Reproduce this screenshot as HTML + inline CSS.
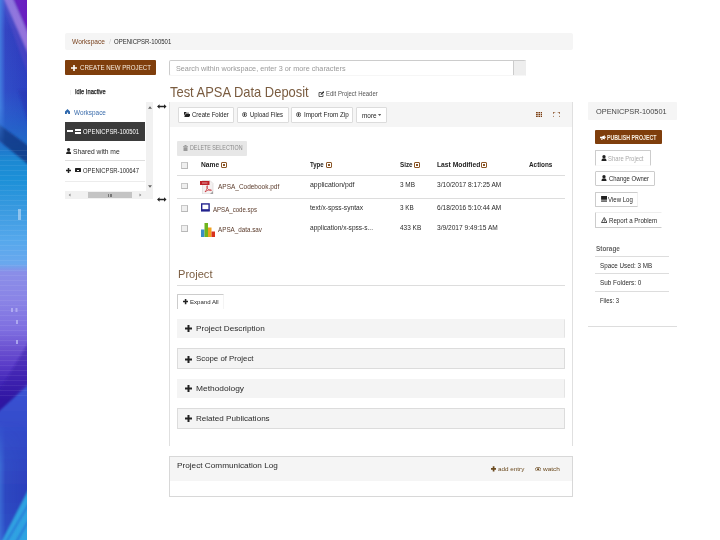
<!DOCTYPE html>
<html><head><meta charset="utf-8">
<style>
*{box-sizing:border-box;margin:0;padding:0}
html,body{width:720px;height:540px;overflow:hidden;background:#fff}
body{position:relative;font-family:"Liberation Sans",sans-serif;font-size:7px;color:#333;line-height:1}
.a,.t,svg{position:absolute}
.t{white-space:nowrap;transform-origin:0 50%;line-height:1}
#c{position:absolute;left:0;top:0;width:720px;height:540px;filter:blur(.35px)}
.strip{left:0;top:0;width:27px;height:540px;overflow:hidden;
 background:linear-gradient(180deg,#5a3fc8 0px,#2f52cc 30px,#2b50c8 90px,#1c3f9e 118px,#1b4ea8 135px,#1f86d2 160px,#3aa0e0 200px,#5aa6ea 250px,#7f86e6 275px,#8a80e4 330px,#5f50d8 365px,#3a2cb8 395px,#2f45c4 420px,#2a44c0 480px,#2850c8 540px);}
.bar{background:#f5f5f5}
.btn{border:1px solid #ccc;background:#fff;border-radius:1px}
.brown{background:#7f3e0c}
.hr{background:#ddd;height:1px}
.acc{left:177px;width:387.8px;background:#f4f4f4;border:1px solid #f4f4f4;border-right-color:#e4e4e4}
.cb{width:6.8px;height:6.6px;border:1px solid #b8b8b8;border-top-color:#c8c8c8;border-left-color:#c8c8c8;background:#efefef;left:181.2px}
</style></head><body>
<svg style="left:0;top:0" width="27" height="540" viewBox="0 0 27 540">
<defs>
<linearGradient id="g0" x1="0" y1="0" x2="0" y2="540" gradientUnits="userSpaceOnUse">
<stop offset="0" stop-color="#3a48c8"/><stop offset=".055" stop-color="#3038bc"/><stop offset=".167" stop-color="#2c42c2"/><stop offset=".222" stop-color="#2658c8"/><stop offset=".259" stop-color="#2268c8"/><stop offset=".296" stop-color="#1c88d2"/><stop offset=".333" stop-color="#1c90d8"/><stop offset=".389" stop-color="#3a9ae0"/><stop offset=".444" stop-color="#55a8ec"/><stop offset=".489" stop-color="#6aa8ee"/><stop offset=".504" stop-color="#8a8ee8"/><stop offset=".556" stop-color="#8a84e6"/><stop offset=".611" stop-color="#7e6ee0"/><stop offset=".648" stop-color="#6a50d0"/><stop offset=".676" stop-color="#5a3cc8"/><stop offset=".704" stop-color="#4428b8"/><stop offset=".74" stop-color="#2c14a0"/><stop offset="1" stop-color="#2c14a0"/>
</linearGradient>
<linearGradient id="g1" x1="0" y1="383" x2="0" y2="540" gradientUnits="userSpaceOnUse">
<stop offset="0" stop-color="#3c54d4"/><stop offset=".4" stop-color="#3048c6"/><stop offset=".7" stop-color="#2c40bc"/><stop offset="1" stop-color="#2a48c4"/>
</linearGradient>
<linearGradient id="g2" x1="0" y1="0" x2="27" y2="0" gradientUnits="userSpaceOnUse">
<stop offset="0" stop-color="#4a90e8" stop-opacity=".75"/><stop offset=".2" stop-color="#4a90e8" stop-opacity=".15"/><stop offset="1" stop-color="#4a90e8" stop-opacity="0"/>
</linearGradient>
<linearGradient id="g3" x1="0" y1="0" x2="0" y2="540" gradientUnits="userSpaceOnUse">
<stop offset="0" stop-color="#fff"/><stop offset=".2" stop-color="#fff"/><stop offset=".28" stop-color="#000"/><stop offset=".78" stop-color="#000"/><stop offset=".86" stop-color="#aaa"/><stop offset="1" stop-color="#aaa"/>
</linearGradient>
<mask id="mk" maskUnits="userSpaceOnUse" x="0" y="0" width="27" height="540"><rect width="27" height="540" fill="url(#g3)"/></mask>
<filter id="bl" x="-20%" y="-5%" width="140%" height="110%"><feGaussianBlur stdDeviation="1.2"/></filter>
</defs>
<rect width="27" height="540" fill="url(#g0)"/>
<g filter="url(#bl)">
<polygon points="-3,413 30,383 30,545 -3,545" fill="url(#g1)"/>
<polygon points="12,-3 30,-3 30,38" fill="#6a1ec0"/>
<polygon points="3,-3 12,-3 30,38 30,58" fill="#a87ee2" opacity=".85"/><polygon points="0,-3 3,-3 30,58 30,80" fill="#5a48c8" opacity=".5"/>
<polygon points="-3,123 30,147 30,166 -3,139" fill="#14357f" opacity=".8"/>
<polygon points="18,90 30,90 30,130" fill="#2834b0" opacity=".6"/>
<polygon points="30,487 30,545 0,545" fill="#2ea4e2"/><polygon points="30,500 30,504 6,545 3,545" fill="#2a58d0" opacity=".5"/><polygon points="30,516 30,520 16,545 13,545" fill="#2a58d0" opacity=".5"/>
<polygon points="30,340 30,380 -3,410 -3,395" fill="#3018a4" opacity=".45"/>
</g>
<rect x="0" y="0" width="27" height="540" fill="url(#g2)" mask="url(#mk)"/>
<rect x="0" y="150" width="27" height="1" fill="#fff" opacity=".07"/><rect x="0" y="155" width="27" height="1" fill="#fff" opacity=".07"/><rect x="0" y="160" width="27" height="1" fill="#fff" opacity=".07"/><rect x="0" y="165" width="27" height="1" fill="#fff" opacity=".07"/><rect x="0" y="170" width="27" height="1" fill="#fff" opacity=".07"/><rect x="0" y="175" width="27" height="1" fill="#fff" opacity=".07"/><rect x="0" y="180" width="27" height="1" fill="#fff" opacity=".07"/><rect x="0" y="185" width="27" height="1" fill="#fff" opacity=".07"/><rect x="0" y="190" width="27" height="1" fill="#fff" opacity=".07"/><rect x="0" y="195" width="27" height="1" fill="#fff" opacity=".07"/><rect x="0" y="200" width="27" height="1" fill="#fff" opacity=".07"/><rect x="0" y="205" width="27" height="1" fill="#fff" opacity=".07"/><rect x="0" y="210" width="27" height="1" fill="#fff" opacity=".07"/><rect x="0" y="215" width="27" height="1" fill="#fff" opacity=".07"/><rect x="0" y="220" width="27" height="1" fill="#fff" opacity=".07"/><rect x="0" y="225" width="27" height="1" fill="#fff" opacity=".07"/><rect x="0" y="230" width="27" height="1" fill="#fff" opacity=".07"/><rect x="0" y="235" width="27" height="1" fill="#fff" opacity=".07"/><rect x="0" y="240" width="27" height="1" fill="#fff" opacity=".07"/><rect x="0" y="245" width="27" height="1" fill="#fff" opacity=".07"/><rect x="0" y="250" width="27" height="1" fill="#fff" opacity=".07"/><rect x="0" y="255" width="27" height="1" fill="#fff" opacity=".07"/><rect x="0" y="260" width="27" height="1" fill="#fff" opacity=".07"/><rect x="0" y="265" width="27" height="1" fill="#fff" opacity=".07"/><rect x="0" y="270" width="27" height="1" fill="#fff" opacity=".07"/><rect x="0" y="275" width="27" height="1" fill="#fff" opacity=".07"/><rect x="0" y="280" width="27" height="1" fill="#fff" opacity=".07"/><rect x="0" y="285" width="27" height="1" fill="#fff" opacity=".07"/><rect x="0" y="290" width="27" height="1" fill="#fff" opacity=".07"/><rect x="0" y="295" width="27" height="1" fill="#fff" opacity=".07"/><rect x="0" y="300" width="27" height="1" fill="#fff" opacity=".07"/><rect x="0" y="305" width="27" height="1" fill="#fff" opacity=".07"/><rect x="0" y="310" width="27" height="1" fill="#fff" opacity=".07"/><rect x="0" y="315" width="27" height="1" fill="#fff" opacity=".07"/><rect x="0" y="320" width="27" height="1" fill="#fff" opacity=".07"/><rect x="0" y="325" width="27" height="1" fill="#fff" opacity=".07"/><rect x="0" y="330" width="27" height="1" fill="#fff" opacity=".07"/><rect x="0" y="335" width="27" height="1" fill="#fff" opacity=".07"/><rect x="0" y="340" width="27" height="1" fill="#fff" opacity=".07"/><rect x="0" y="345" width="27" height="1" fill="#fff" opacity=".07"/><rect x="0" y="350" width="27" height="1" fill="#fff" opacity=".07"/><rect x="0" y="355" width="27" height="1" fill="#fff" opacity=".07"/><rect x="0" y="360" width="27" height="1" fill="#fff" opacity=".07"/><rect x="0" y="365" width="27" height="1" fill="#fff" opacity=".07"/><rect x="0" y="370" width="27" height="1" fill="#fff" opacity=".07"/><rect x="0" y="375" width="27" height="1" fill="#fff" opacity=".07"/><rect x="0" y="380" width="27" height="1" fill="#fff" opacity=".07"/><rect x="0" y="385" width="27" height="1" fill="#fff" opacity=".07"/><rect x="0" y="390" width="27" height="1" fill="#fff" opacity=".07"/><rect x="0" y="395" width="27" height="1" fill="#fff" opacity=".07"/><rect x="18" y="209" width="3" height="11" fill="#cfe4fa" opacity=".55"/>
<rect x="11" y="308" width="2" height="4" fill="#b8b4f4" opacity=".8"/><rect x="15.500" y="308" width="2" height="4" fill="#b8b4f4" opacity=".8"/><rect x="16" y="320" width="2" height="4" fill="#b8b4f4" opacity=".8"/><rect x="16" y="340" width="2" height="4" fill="#b8b4f4" opacity=".8"/>
</svg>
<div id="c">
<!-- breadcrumb -->
<div class="a bar" style="left:65px;top:32.5px;width:508px;height:17px;border-radius:2px"></div>
<!-- create btn -->
<div class="a brown" style="left:65px;top:60px;width:91px;height:15px;border-radius:1px"></div>
<svg style="left:70.7px;top:64.7px" width="6" height="6" viewBox="0 0 6 6"><path d="M2.2 0h1.6v2.2H6v1.6H3.8V6H2.2V3.8H0V2.2h2.2z" fill="#fff"/></svg>
<!-- search -->
<div class="a" style="left:169px;top:60.3px;width:357px;height:16px;border:1px solid #ccc;border-bottom-color:#f6f6f6;border-radius:2px;background:#fff"></div>
<div class="a" style="left:513px;top:61.3px;width:12.5px;height:14px;background:#eee;border-left:1px solid #ccc"></div>
<!-- edit icon -->
<svg style="left:317.5px;top:91px" width="6.5" height="6.5" viewBox="0 0 13 13"><path d="M10 7v4H2V3h5" fill="none" stroke="#333" stroke-width="1.6"/><path d="M5 8l1-3 5-5 2 2-5 5z" fill="#333"/></svg>
<!-- tree -->
<svg style="left:65.4px;top:109.2px" width="5" height="5.2" viewBox="0 0 12 12"><path d="M6 0L0 5.5V12h4.5V8h3v4H12V5.5z" fill="#2e68ad"/></svg>
<div class="a" style="left:65px;top:122px;width:80px;height:19px;background:#3b3b3b"></div>
<div class="a" style="left:66.7px;top:130.2px;width:5.9px;height:2px;background:#fff"></div>
<div class="a" style="left:74.7px;top:128.5px;width:6px;height:2.3px;background:#fff"></div>
<div class="a" style="left:74.7px;top:131.7px;width:6px;height:2.3px;background:#fff"></div>
<svg style="left:65.5px;top:148.3px" width="5.2" height="6" viewBox="0 0 10 12"><circle cx="5" cy="3.2" r="3.2" fill="#222"/><path d="M0 12c0-4 2-5.5 5-5.5s5 1.500 5 5.500z" fill="#222"/></svg>
<div class="a hr" style="left:65px;top:160.3px;width:80px;background:#dedede"></div>
<svg style="left:65.5px;top:167.5px" width="5" height="5" viewBox="0 0 6 6"><path d="M2.100 0h1.800v2.100H6v1.800H3.900V6H2.100V3.900H0V2.100h2.100z" fill="#222"/></svg>
<div class="a" style="left:75.3px;top:167.7px;width:5.7px;height:4.8px;background:#222;border-radius:.5px"></div>
<div class="a" style="left:77px;top:169.600px;width:2.400px;height:1px;background:#fff"></div>
<div class="a hr" style="left:65px;top:180.600px;width:80px;background:#ececec"></div>
<div class="a" style="left:145.600px;top:101.500px;width:7.700px;height:89px;background:#f1f1f1"></div>
<div class="a" style="left:65px;top:190.600px;width:88.300px;height:8.700px;background:#f1f1f1"></div>
<div class="a" style="left:87.500px;top:192.300px;width:44px;height:5.300px;background:#c4c4c4"></div>
<div class="a" style="left:108px;top:193.500px;width:.7px;height:3px;background:#777"></div>
<div class="a" style="left:109.500px;top:193.500px;width:.7px;height:3px;background:#777"></div>
<div class="a" style="left:111px;top:193.500px;width:.7px;height:3px;background:#777"></div>
<svg style="left:147.500px;top:105.500px" width="4" height="3" viewBox="0 0 4 3"><path d="M0 2.700L2 .3l2 2.400z" fill="#666"/></svg>
<svg style="left:147.500px;top:184.500px" width="4" height="3" viewBox="0 0 4 3"><path d="M0 .3L2 2.700l2-2.400z" fill="#666"/></svg>
<svg style="left:68px;top:193px" width="3" height="4" viewBox="0 0 3 4"><path d="M2.500 .5L.7 2l1.800 1.500z" fill="#888"/></svg>
<svg style="left:139px;top:193px" width="3" height="4" viewBox="0 0 3 4"><path d="M.5 .5L2.300 2 .5 3.500z" fill="#888"/></svg>
<svg style="left:157px;top:103.700px" width="9.600" height="5" viewBox="0 0 19 10"><path d="M0 5l5-4.500v3h9v-3L19 5l-5 4.500v-3H5v3z" fill="#222"/></svg>
<svg style="left:157px;top:196.800px" width="9.600" height="5" viewBox="0 0 19 10"><path d="M0 5l5-4.500v3h9v-3L19 5l-5 4.500v-3H5v3z" fill="#222"/></svg>

<!-- main panel -->
<div class="a" style="left:169px;top:101.500px;width:404px;height:344px;border:1px solid #e0e0e0;border-top:0;border-bottom:0"></div>
<div class="a bar" style="left:170px;top:102.200px;width:402px;height:24.400px"></div>
<div class="a btn" style="left:177.500px;top:107px;width:56.500px;height:15.600px;border-color:#dcdcdc"></div>
<div class="a btn" style="left:236.500px;top:107px;width:52.300px;height:15.600px;border-color:#dcdcdc"></div>
<div class="a btn" style="left:290.700px;top:107px;width:62.600px;height:15.600px;border-color:#dcdcdc"></div>
<div class="a btn" style="left:356px;top:107px;width:30.700px;height:15.600px;border-color:#dcdcdc"></div>
<svg style="left:183.700px;top:112.300px" width="6.500" height="5" viewBox="0 0 13 10"><path d="M0 0h4l1 1.500h5V3H2.500L0 8z" fill="#222"/><path d="M3 4h10l-2.500 6H.5z" fill="#222"/></svg>
<svg style="left:242px;top:112.200px" width="5.200" height="5.200" viewBox="0 0 12 12"><circle cx="6" cy="6" r="5" fill="none" stroke="#222" stroke-width="1.500"/><path d="M6 2.500L9 6H7v3H5V6H3z" fill="#222"/></svg>
<svg style="left:296.200px;top:112.200px" width="5.200" height="5.200" viewBox="0 0 12 12"><circle cx="6" cy="6" r="5" fill="none" stroke="#222" stroke-width="1.500"/><path d="M6 2.500L9 6H7v3H5V6H3z" fill="#222"/></svg>
<svg style="left:377.500px;top:114.300px" width="3.400" height="2" viewBox="0 0 4 2"><path d="M0 0h4L2 2z" fill="#222"/></svg>
<svg style="left:535.800px;top:112px" width="6.600" height="5" viewBox="0 0 13 10"><g fill="#7a3c0e"><rect x="0" y="0" width="3.400" height="2.600"/><rect x="4.800" y="0" width="3.400" height="2.600"/><rect x="9.600" y="0" width="3.400" height="2.600"/><rect x="0" y="3.700" width="3.400" height="2.600"/><rect x="4.800" y="3.700" width="3.400" height="2.600"/><rect x="9.600" y="3.700" width="3.400" height="2.600"/><rect x="0" y="7.400" width="3.400" height="2.600"/><rect x="4.800" y="7.400" width="3.400" height="2.600"/><rect x="9.600" y="7.400" width="3.400" height="2.600"/></g></svg>
<svg style="left:553px;top:111.600px" width="7" height="5.800" viewBox="0 0 14 12"><path d="M0 4V0h4.500M9.500 0H14v4M14 8v4H9.500M4.500 12H0V8" fill="none" stroke="#7a3c0e" stroke-width="2"/></svg>

<div class="a" style="left:177px;top:141.200px;width:70px;height:14.400px;background:#e7e7e7;border-radius:1px"></div>
<svg style="left:183px;top:145.300px" width="5" height="6" viewBox="0 0 10 12"><path d="M0 2h3V0h4v2h3v1.500H0zM1 4.500h8V12H1z" fill="#999"/></svg>

<div class="a cb" style="top:162.300px"></div>
<div class="a cb" style="top:182.800px"></div>
<div class="a cb" style="top:205.300px"></div>
<div class="a cb" style="top:225px"></div>
<!-- sort icons -->
<div class="a" style="left:220.9px;top:161.700px;width:6px;height:6px;border:1px solid #8a5526;border-radius:1px"></div><div class="a" style="left:222.9px;top:163.700px;width:2px;height:2px;background:#8a5526"></div>
<div class="a" style="left:326.2px;top:161.700px;width:6px;height:6px;border:1px solid #8a5526;border-radius:1px"></div><div class="a" style="left:328.2px;top:163.700px;width:2px;height:2px;background:#8a5526"></div>
<div class="a" style="left:414.2px;top:161.700px;width:6px;height:6px;border:1px solid #8a5526;border-radius:1px"></div><div class="a" style="left:416.2px;top:163.700px;width:2px;height:2px;background:#8a5526"></div>
<div class="a" style="left:481.4px;top:161.700px;width:6px;height:6px;border:1px solid #8a5526;border-radius:1px"></div><div class="a" style="left:483.4px;top:163.700px;width:2px;height:2px;background:#8a5526"></div>
<div class="a hr" style="left:177px;top:174.800px;width:387.500px"></div>
<div class="a hr" style="left:177px;top:198.200px;width:387.500px"></div>
<!-- pdf icon -->
<svg style="left:200px;top:179.500px" width="14.500" height="14.500" viewBox="0 0 29 29"><path d="M5 1h15l6 6v21H5z" fill="#f4f1f1" stroke="#cfcaca" stroke-width="1"/><rect x="0" y="2" width="19" height="8" fill="#bd2027"/><rect x="4" y="5" width="11" height="2" fill="#fff" opacity=".55"/><path d="M26 22v6h-6z" fill="#777" opacity=".6"/><path d="M10 24c3-4 5-8 5-11s-2-2-1.500 1c.5 4 5 7 8 7s1-2-2-1.500S12 22 10 24z" fill="none" stroke="#c4242b" stroke-width="1.400"/></svg>
<!-- sps icon -->
<svg style="left:200.800px;top:203.200px" width="8.800" height="8.800" viewBox="0 0 19 18"><rect x="1.500" y="1.500" width="16" height="13" fill="#fff" stroke="#23238e" stroke-width="3"/><rect x="0" y="14" width="19" height="4" fill="#23238e"/></svg>
<!-- sav icon -->
<svg style="left:200.500px;top:222.500px" width="14" height="14.500" viewBox="0 0 28 29"><rect x="0" y="13" width="7" height="16" fill="#3a8ec8"/><rect x="7" y="0" width="7" height="29" fill="#6eb41e"/><rect x="14" y="9" width="7" height="20" fill="#f0a01e"/><rect x="21" y="17" width="7" height="12" fill="#d8321e"/></svg>

<div class="a hr" style="left:176.500px;top:284.800px;width:388.300px"></div>
<div class="a" style="left:177px;top:294.200px;width:47.200px;height:15px;border:1px solid #ccc;border-right-color:#f4f4f4;border-bottom:0;border-radius:1px 1px 0 0;background:#fff"></div>
<svg style="left:183px;top:299.400px" width="5.200" height="5.200" viewBox="0 0 6 6"><path d="M2.100 0h1.800v2.100H6v1.800H3.900V6H2.100V3.900H0V2.100h2.100z" fill="#222"/></svg>

<div class="a acc" style="top:318.800px;height:19px"></div>
<div class="a acc" style="top:348px;height:20.700px;border-color:#dcdcdc"></div>
<div class="a acc" style="top:379px;height:18.800px"></div>
<div class="a acc" style="top:408.300px;height:20.300px;border-color:#dcdcdc"></div>
<svg style="left:185px;top:325.200px" width="7" height="7" viewBox="0 0 6 6"><path d="M2.150 0h1.700v2.150H6v1.700H3.850V6h-1.700V3.850H0v-1.700h2.150z" fill="#222"/></svg>
<svg style="left:185px;top:355.700px" width="7" height="7" viewBox="0 0 6 6"><path d="M2.150 0h1.700v2.150H6v1.700H3.850V6h-1.700V3.850H0v-1.700h2.150z" fill="#222"/></svg>
<svg style="left:185px;top:385.400px" width="7" height="7" viewBox="0 0 6 6"><path d="M2.150 0h1.700v2.150H6v1.700H3.850V6h-1.700V3.850H0v-1.700h2.150z" fill="#222"/></svg>
<svg style="left:185px;top:415.200px" width="7" height="7" viewBox="0 0 6 6"><path d="M2.150 0h1.700v2.150H6v1.700H3.850V6h-1.700V3.850H0v-1.700h2.150z" fill="#222"/></svg>

<!-- comm log -->
<div class="a" style="left:169px;top:456px;width:404px;height:41px;border:1px solid #d8d8d8"></div>
<div class="a bar" style="left:170px;top:457px;width:402px;height:23.500px"></div>
<svg style="left:490.500px;top:466.200px" width="5.200" height="5.600" viewBox="0 0 6 6"><path d="M2 0h2v2H6v2H4V6H2V4H0V2h2z" fill="#6b4a1f"/></svg>
<svg style="left:535.300px;top:466.500px" width="6.200" height="4.600" viewBox="0 0 14 10"><path d="M0 5c3-6 11-6 14 0-3 6-11 6-14 0z" fill="none" stroke="#6b4a1f" stroke-width="1.800"/><circle cx="7" cy="5" r="2.600" fill="#6b4a1f"/></svg>

<!-- sidebar -->
<div class="a bar" style="left:588.200px;top:102.200px;width:88.800px;height:17.700px;border-radius:1px"></div>
<div class="a brown" style="left:595px;top:130px;width:67px;height:14px;border-radius:1px"></div>
<svg style="left:600px;top:134.800px" width="6.300" height="5.200" viewBox="0 0 13 10"><path d="M0 3h3l7-3v9L3 6.500H0z" fill="#fff"/><path d="M2 7h2.500l1 3H3z" fill="#fff"/><rect x="11" y="3" width="2" height="3" fill="#fff"/></svg>
<div class="a" style="left:595px;top:150px;width:56px;height:15.500px;border:1px solid #ccc;border-bottom-color:#fafafa;border-radius:1px;background:#fff"></div>
<div class="a btn" style="left:595px;top:171.200px;width:60.200px;height:14.400px"></div>
<div class="a" style="left:595px;top:192px;width:43.200px;height:14.600px;border:1px solid #ccc;border-right-color:#f0f0f0;border-radius:1px;background:#fff"></div>
<div class="a" style="left:595px;top:212.300px;width:67.300px;height:15.300px;border:1px solid #ccc;border-right-color:#fff;border-top-color:#eee;border-radius:1px;background:#fff"></div>
<svg style="left:601px;top:154.800px" width="6" height="6.200" viewBox="0 0 10 12"><circle cx="5" cy="3.200" r="3.200" fill="#222"/><path d="M0 12c0-4 2-5.500 5-5.500s5 1.500 5 5.500z" fill="#222"/></svg>
<svg style="left:601px;top:175.200px" width="6" height="6.200" viewBox="0 0 10 12"><circle cx="5" cy="3.200" r="3.200" fill="#222"/><path d="M0 12c0-4 2-5.500 5-5.500s5 1.500 5 5.500z" fill="#222"/></svg>
<svg style="left:600.800px;top:196.300px" width="6.200" height="6" viewBox="0 0 12 12"><rect x="0" y="0" width="12" height="7.500" fill="#222"/><rect x="0" y="9" width="12" height="1.200" fill="#222"/><rect x="0" y="10.800" width="12" height="1.200" fill="#222"/></svg>
<svg style="left:600.500px;top:216.800px" width="6.500" height="6" viewBox="0 0 13 12"><path d="M6.500 1L12 11H1z" fill="none" stroke="#222" stroke-width="1.600" stroke-linejoin="round"/><rect x="5.800" y="4.500" width="1.400" height="3.300" fill="#222"/><rect x="5.800" y="8.500" width="1.400" height="1.400" fill="#222"/></svg>

<div class="a hr" style="left:595px;top:256px;width:74px"></div>
<div class="a hr" style="left:595px;top:273.200px;width:74px"></div>
<div class="a hr" style="left:595px;top:290.800px;width:74px"></div>
<div class="a hr" style="left:587.600px;top:326px;width:89px"></div>
<div class="t" style="left:72.0px;top:37.6px;font-size:7px;color:#7a4420;font-weight:normal;transform:scaleX(0.946);">Workspace</div>
<div class="t" style="left:108.5px;top:37.6px;font-size:7px;color:#ccc;font-weight:normal;transform:scaleX(1.024);">/</div>
<div class="t" style="left:113.7px;top:37.6px;font-size:7px;color:#2a2a2a;font-weight:normal;transform:scaleX(0.856);">OPENICPSR-100501</div>
<div class="t" style="left:79.5px;top:64.0px;font-size:7.5px;color:#f6ecdf;font-weight:normal;transform:scaleX(0.820);">CREATE NEW PROJECT</div>
<div class="t" style="left:175.5px;top:64.6px;font-size:7px;color:#999;font-weight:normal;transform:scaleX(1.035);">Search within workspace, enter 3 or more characters</div>
<div class="t" style="left:70.3px;top:88.6px;font-size:6px;color:#ddd;font-weight:normal;transform:scaleX(0.640);">|</div>
<div class="t" style="left:74.5px;top:88.6px;font-size:6.5px;color:#222;font-weight:normal;transform:scaleX(0.885);-webkit-text-stroke:.25px #222;">Idle Inactive</div>
<div class="t" style="left:170.0px;top:83.5px;font-size:15px;color:#7a5c40;font-weight:normal;transform:scaleX(0.862);">Test APSA Data Deposit</div>
<div class="t" style="left:325.8px;top:91.1px;font-size:6.5px;color:#555;font-weight:normal;transform:scaleX(0.917);">Edit Project Header</div>
<div class="t" style="left:73.9px;top:108.5px;font-size:7px;color:#3a6cab;font-weight:normal;transform:scaleX(0.914);">Workspace</div>
<div class="t" style="left:82.8px;top:127.8px;font-size:7px;color:#fff;font-weight:normal;transform:scaleX(0.838);">OPENICPSR-100501</div>
<div class="t" style="left:73.4px;top:147.9px;font-size:7.5px;color:#2a2a2a;font-weight:normal;transform:scaleX(0.896);">Shared with me</div>
<div class="t" style="left:82.8px;top:166.7px;font-size:7px;color:#2a2a2a;font-weight:normal;transform:scaleX(0.838);">OPENICPSR-100647</div>
<div class="t" style="left:192.0px;top:111.4px;font-size:7px;color:#1c1c1c;font-weight:normal;transform:scaleX(0.858);">Create Folder</div>
<div class="t" style="left:250.0px;top:111.4px;font-size:7px;color:#1c1c1c;font-weight:normal;transform:scaleX(0.848);">Upload Files</div>
<div class="t" style="left:303.5px;top:111.4px;font-size:7px;color:#1c1c1c;font-weight:normal;transform:scaleX(0.900);">Import From Zip</div>
<div class="t" style="left:362.0px;top:111.6px;font-size:7px;color:#1c1c1c;font-weight:normal;transform:scaleX(0.921);">more</div>
<div class="t" style="left:189.5px;top:145.0px;font-size:6.8px;color:#8a8a8a;font-weight:normal;transform:scaleX(0.785);">DELETE SELECTION</div>
<div class="t" style="left:200.5px;top:161.3px;font-size:7px;color:#222;font-weight:bold;transform:scaleX(0.954);">Name</div>
<div class="t" style="left:310.0px;top:161.3px;font-size:7px;color:#222;font-weight:bold;transform:scaleX(0.866);">Type</div>
<div class="t" style="left:400.0px;top:161.3px;font-size:7px;color:#222;font-weight:bold;transform:scaleX(0.892);">Size</div>
<div class="t" style="left:436.7px;top:161.3px;font-size:7px;color:#222;font-weight:bold;transform:scaleX(0.960);">Last Modified</div>
<div class="t" style="left:528.9px;top:161.3px;font-size:7px;color:#222;font-weight:bold;transform:scaleX(0.908);">Actions</div>
<div class="t" style="left:218.0px;top:182.9px;font-size:7px;color:#5a3a2a;font-weight:normal;transform:scaleX(0.925);">APSA_Codebook.pdf</div>
<div class="t" style="left:310.0px;top:180.9px;font-size:7px;color:#2a2a2a;font-weight:normal;transform:scaleX(0.985);">application/pdf</div>
<div class="t" style="left:400.0px;top:180.9px;font-size:7px;color:#2a2a2a;font-weight:normal;transform:scaleX(0.918);">3 MB</div>
<div class="t" style="left:436.7px;top:180.9px;font-size:7px;color:#2a2a2a;font-weight:normal;transform:scaleX(0.939);">3/10/2017 8:17:25 AM</div>
<div class="t" style="left:213.0px;top:205.9px;font-size:7px;color:#5a3a2a;font-weight:normal;transform:scaleX(0.870);">APSA_code.sps</div>
<div class="t" style="left:310.0px;top:204.1px;font-size:7px;color:#2a2a2a;font-weight:normal;transform:scaleX(0.946);">text/x-spss-syntax</div>
<div class="t" style="left:400.0px;top:204.1px;font-size:7px;color:#2a2a2a;font-weight:normal;transform:scaleX(0.902);">3 KB</div>
<div class="t" style="left:436.7px;top:204.1px;font-size:7px;color:#2a2a2a;font-weight:normal;transform:scaleX(0.939);">6/18/2016 5:10:44 AM</div>
<div class="t" style="left:218.0px;top:226.1px;font-size:7px;color:#5a3a2a;font-weight:normal;transform:scaleX(0.897);">APSA_data.sav</div>
<div class="t" style="left:310.0px;top:223.6px;font-size:7px;color:#2a2a2a;font-weight:normal;transform:scaleX(0.936);">application/x-spss-s...</div>
<div class="t" style="left:400.0px;top:223.6px;font-size:7px;color:#2a2a2a;font-weight:normal;transform:scaleX(0.923);">433 KB</div>
<div class="t" style="left:436.7px;top:223.6px;font-size:7px;color:#2a2a2a;font-weight:normal;transform:scaleX(0.941);">3/9/2017 9:49:15 AM</div>
<div class="t" style="left:177.5px;top:269.4px;font-size:11px;color:#7a5c40;font-weight:normal;transform:scaleX(1.007);">Project</div>
<div class="t" style="left:190.0px;top:299.1px;font-size:6px;color:#2a2a2a;font-weight:normal;transform:scaleX(1.012);">Expand All</div>
<div class="t" style="left:195.5px;top:324.8px;font-size:8px;color:#2a2a2a;font-weight:normal;transform:scaleX(1.023);">Project Description</div>
<div class="t" style="left:195.5px;top:355.3px;font-size:8px;color:#2a2a2a;font-weight:normal;transform:scaleX(0.980);">Scope of Project</div>
<div class="t" style="left:195.6px;top:385.0px;font-size:8px;color:#2a2a2a;font-weight:normal;transform:scaleX(1.048);">Methodology</div>
<div class="t" style="left:195.6px;top:414.8px;font-size:8px;color:#2a2a2a;font-weight:normal;transform:scaleX(1.010);">Related Publications</div>
<div class="t" style="left:177.4px;top:462.2px;font-size:8px;color:#2a2a2a;font-weight:normal;transform:scaleX(1.027);">Project Communication Log</div>
<div class="t" style="left:497.9px;top:465.9px;font-size:6.2px;color:#6b4a1f;font-weight:normal;transform:scaleX(1.019);">add entry</div>
<div class="t" style="left:542.6px;top:465.9px;font-size:6.2px;color:#6b4a1f;font-weight:normal;transform:scaleX(1.051);">watch</div>
<div class="t" style="left:595.6px;top:108.2px;font-size:7px;color:#444;font-weight:normal;transform:scaleX(1.056);">OPENICPSR-100501</div>
<div class="t" style="left:607.4px;top:134.0px;font-size:7px;color:#f8efe2;font-weight:bold;transform:scaleX(0.752);">PUBLISH PROJECT</div>
<div class="t" style="left:608.2px;top:154.6px;font-size:7px;color:#aaa;font-weight:normal;transform:scaleX(0.837);">Share Project</div>
<div class="t" style="left:608.5px;top:174.9px;font-size:7px;color:#2a2a2a;font-weight:normal;transform:scaleX(0.851);">Change Owner</div>
<div class="t" style="left:608.2px;top:196.0px;font-size:7px;color:#2a2a2a;font-weight:normal;transform:scaleX(0.865);">View Log</div>
<div class="t" style="left:608.5px;top:216.7px;font-size:7px;color:#2a2a2a;font-weight:normal;transform:scaleX(0.877);">Report a Problem</div>
<div class="t" style="left:595.6px;top:244.6px;font-size:7px;color:#666;font-weight:bold;transform:scaleX(0.917);">Storage</div>
<div class="t" style="left:599.7px;top:262.2px;font-size:7px;color:#2a2a2a;font-weight:normal;transform:scaleX(0.894);">Space Used: 3 MB</div>
<div class="t" style="left:599.7px;top:279.4px;font-size:7px;color:#2a2a2a;font-weight:normal;transform:scaleX(0.907);">Sub Folders: 0</div>
<div class="t" style="left:599.7px;top:297.3px;font-size:7px;color:#2a2a2a;font-weight:normal;transform:scaleX(0.842);">Files: 3</div>
</div>
</body></html>
